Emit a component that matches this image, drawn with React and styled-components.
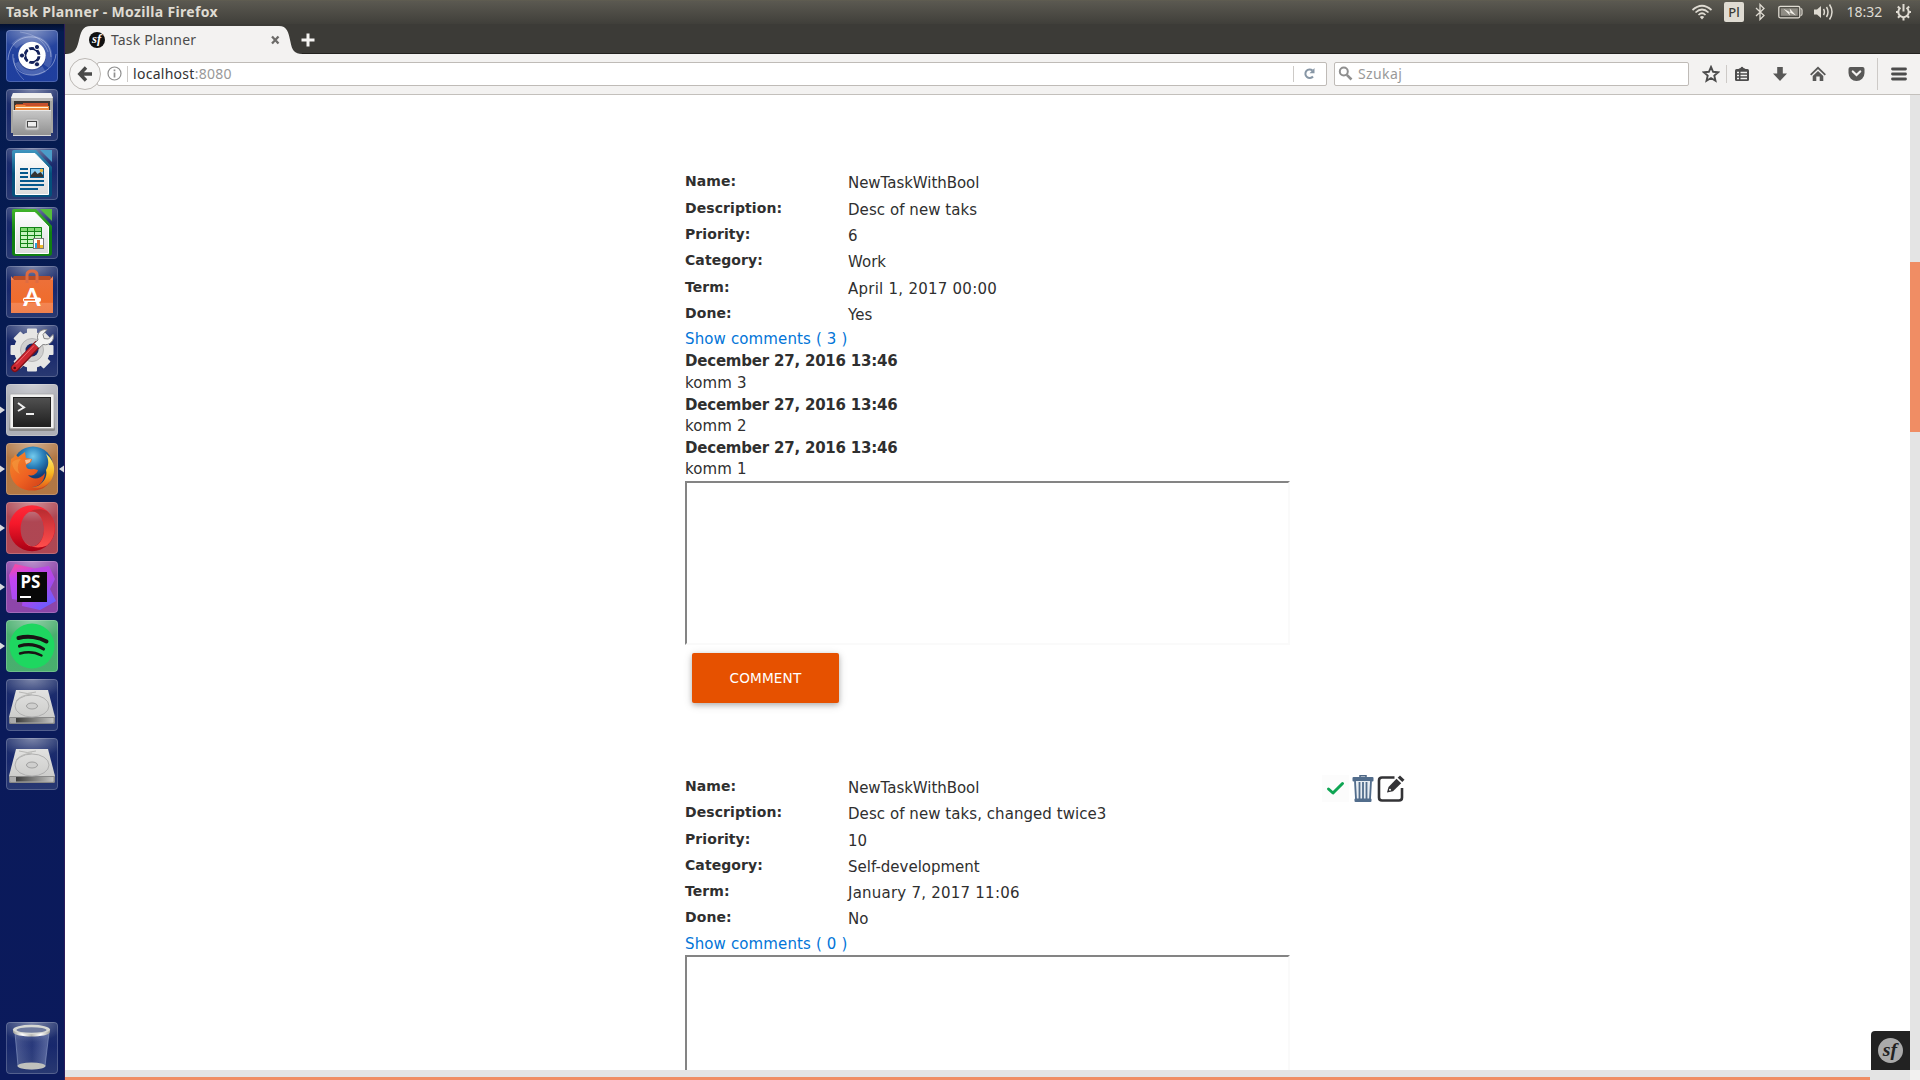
import React from "react";
import styled, { createGlobalStyle } from "styled-components";

const GlobalStyle = createGlobalStyle`
  * { box-sizing: border-box; }
  body { margin: 0; overflow: hidden; background: #fff; }
  svg { display: block; flex: none; }
`;

const ui = `"Noto Sans", "Open Sans", sans-serif`;

const Desktop = styled.div`
  width: 1920px;
  height: 1080px;
  overflow: hidden;
  display: flex;
  flex-direction: column;
  font-family: ${ui};
`;

const Panel = styled.header`
  height: 24px;
  flex: none;
  display: flex;
  align-items: center;
  justify-content: space-between;
  padding: 0 8px 0 6px;
  background: linear-gradient(#625f50 0, #5b5951 1px, #403f3a 24px);
  color: #dfdbd2;
`;

const WindowTitle = styled.div`
  font-size: 14px;
  font-weight: 700;
  line-height: 24px;
  letter-spacing: 0.33px;
`;

const Indicators = styled.div`
  display: flex;
  align-items: center;
`;

const Indicator = styled.div`
  display: flex;
  justify-content: center;
  width: ${(p) => p.$w}px;
  margin-left: ${(p) => p.$gap || 0}px;
`;

const Keyboard = styled(Indicator)`
  height: 20px;
  border-radius: 2px;
  background: #dfdbd2;
  color: #3c3b37;
  font-size: 13px;
  font-weight: 500;
  line-height: 20px;
`;

const Clock = styled(Indicator)`
  font-size: 14px;
  line-height: 24px;
`;

const Workspace = styled.div`
  flex: 1;
  display: flex;
  min-height: 0;
`;

const Launcher = styled.nav`
  width: 65px;
  flex: none;
  display: flex;
  flex-direction: column;
  gap: 7px;
  padding: 6px 0;
  border-right: 1px solid #2c1c5c;
  background: linear-gradient(#02102f 0, #051c50 8px, #061a52 300px, #0a1a5a 700px, #0b1a5c 100%);
`;

const LauncherRow = styled.div`
  height: 52px;
  display: grid;
  grid-template-columns: 6px 52px 6px;
  align-items: center;
  ${(p) => p.$bottom && "margin-top: auto;"}
`;

const Tile = styled.div`
  width: 52px;
  height: 52px;
  border-radius: 4px;
  overflow: hidden;
  box-shadow: inset 0 0 0 1px rgba(255, 255, 255, 0.2);
  background: radial-gradient(ellipse 34px 20px at 50% 0, rgba(255, 255, 255, 0.42), rgba(255, 255, 255, 0.02)),
    ${(p) => p.$color || "linear-gradient(#1e2f6b, #13246a 45%, #25356f)"};
`;

const Browser = styled.main`
  flex: 1;
  display: flex;
  flex-direction: column;
  min-width: 0;
`;

const TabBar = styled.div`
  height: 30px;
  flex: none;
  display: flex;
  background: #3c3b37;
  border-bottom: 1px solid #23221f;
`;

const Tab = styled.div`
  width: 236px;
  height: 30px;
  flex: none;
  display: flex;
  align-items: center;
  position: relative;
  padding: 2px 15px 0 24px;
  color: #4c4c4c;
  font-size: 14px;
`;

const TabShape = styled.svg`
  position: absolute;
  left: 0;
  top: 0;
`;

const TabLabel = styled.span`
  position: relative;
  flex: 1;
  margin-left: 6px;
  padding-bottom: 2px;
  letter-spacing: 0.16px;
`;

const TabPart = styled.div`
  position: relative;
`;

const NewTab = styled.div`
  display: flex;
  align-items: center;
  padding: 2px 0 0 0;
`;

const Toolbar = styled.div`
  height: 41px;
  flex: none;
  display: flex;
  align-items: center;
  padding: 0 0 1px 4px;
  background: #f3f2f1;
  border-bottom: 1px solid #c3c0bc;
  color: #4c4c4c;
`;

const BackButton = styled.div`
  width: 32px;
  height: 32px;
  flex: none;
  display: grid;
  place-items: center;
  position: relative;
  border: 1px solid #bcb8b4;
  border-radius: 50%;
  background: #f6f5f4;
`;

const Field = styled.div`
  height: 24px;
  width: ${(p) => p.$w}px;
  margin-left: ${(p) => p.$gap}px;
  padding: 0 ${(p) => p.$right || 0}px 0 ${(p) => p.$pad}px;
  flex: none;
  display: flex;
  align-items: center;
  border: 1px solid #bfbbb7;
  border-radius: 2px;
  background: #fff;
  font-size: 14px;
  line-height: 22px;
`;

const Divider = styled.div`
  width: 1px;
  flex: none;
  height: ${(p) => p.$h}px;
  margin: 0 ${(p) => p.$after || 0}px 0 ${(p) => p.$before || 0}px;
  background: #cdcac7;
`;

const Address = styled.span`
  flex: 1;
  padding-top: 1px;
  color: #333;
  letter-spacing: 0.28px;
`;

const Muted = styled.span`
  color: #999;
`;

const SearchHint = styled(Muted)`
  margin-left: 5px;
  padding-top: 1px;
  letter-spacing: 0.4px;
`;

const ToolIcon = styled.div`
  width: ${(p) => p.$w}px;
  margin-left: ${(p) => p.$gap || 0}px;
  display: flex;
  justify-content: center;
`;

const Viewport = styled.div`
  flex: 1;
  display: grid;
  grid-template-columns: 1fr 10px;
  grid-template-rows: 975px 10px;
  position: relative;
`;

const Page = styled.section`
  overflow: hidden;
  padding: 76.4px 0 0 620px;
  background: #fff;
  color: #2f2f2f;
  font-family: "DejaVu Sans", sans-serif;
  font-size: 15px;
  line-height: 21.6px;
`;

const Task = styled.article`
  height: 604.6px;
  display: grid;
  grid-template-columns: 637px auto;
  justify-content: start;
`;

const TaskBody = styled.div`
  width: 605px;
`;

const Property = styled.div`
  height: 26.3px;
  display: grid;
  grid-template-columns: 163px 1fr;
`;

const Label = styled.div`
  font-size: 14px;
  font-weight: 700;
  letter-spacing: 0.08px;
`;

const Value = styled.div`
  padding-top: 2px;
  letter-spacing: ${(p) => p.$track}px;
`;

const CommentsLink = styled.a`
  display: block;
  color: #0275d8;
  letter-spacing: 0.13px;
`;

const Comment = styled.div`
  line-height: 21.63px;
`;

const CommentList = styled.div`
  ${Comment}:first-child {
    padding-top: 0.6px;
  }
`;

const CommentDate = styled.div`
  font-weight: 700;
  letter-spacing: -0.21px;
`;

const CommentText = styled.div`
  letter-spacing: 0.12px;
`;

const CommentBox = styled.textarea`
  display: block;
  width: 605px;
  height: 164px;
  margin: 0;
  resize: none;
  border: 2px solid;
  border-color: #848484 #fafafa #fafafa #848484;
  background: #fff;
`;

const CommentButton = styled.button`
  display: block;
  width: 147px;
  height: 50px;
  margin: 8px 0 0 7px;
  padding: 0;
  border: 0;
  border-radius: 2px;
  background: #e65100;
  color: #fff;
  font: 13.6px/50px "DejaVu Sans", sans-serif;
  letter-spacing: 0.15px;
  box-shadow: 0 2px 5px rgba(0, 0, 0, 0.2), 0 2px 10px rgba(0, 0, 0, 0.16);
`;

const Actions = styled.div`
  height: 27px;
  margin-top: -1px;
  display: flex;
  align-items: center;
`;

const DoneBox = styled.div`
  width: 27px;
  height: 27px;
  margin-right: 3px;
  background: #fcfcfc;
`;

const EditIcon = styled.svg`
  margin-left: 1.5px;
`;

const VerticalTrack = styled.div`
  padding-top: 167px;
  background: #e4e4e4;
`;

const VerticalThumb = styled.div`
  height: 170px;
  background: #f08d64;
`;

const HorizontalTrack = styled.div`
  padding: 7px 40px 0 0;
  background: #e4e4e4;
`;

const HorizontalThumb = styled.div`
  height: 3px;
  background: #f08d64;
`;

const Corner = styled.div`
  background: #f2f1f0;
`;

const DebugBadge = styled.div`
  position: absolute;
  right: 10px;
  bottom: 10px;
  width: 39px;
  height: 39px;
  display: grid;
  place-items: center;
  border-top-left-radius: 4px;
  background: #222;
`;

const Arrow = ({ left }) => (
  <svg width="6" height="10" viewBox="0 0 6 10">
    <path d={left ? "M6 1.5V8.5L1 5Z" : "M0 1.5V8.5L5 5Z"} fill="#d9dade" />
  </svg>
);

const SfLogo = ({ size, bg, fg }) => (
  <svg width={size} height={size} viewBox="0 0 24 24">
    <circle cx="12" cy="12" r="12" fill={bg} />
    <text x="11.5" y="17" fontSize="19" fontStyle="italic" fontWeight="700" fontFamily="Liberation Serif, serif" textAnchor="middle" fill={fg}>sf</text>
  </svg>
);

const Glyph = ({ children }) => (
  <svg width="52" height="52" viewBox="0 0 52 52">{children}</svg>
);

const DashIcon = () => (
  <Glyph>
    <g fill="none" stroke="#dfe6fa">
      <path d="M2 30C3 14 14 6 27 7C38 8 45 16 45 27" opacity=".45" strokeWidth="1" />
      <path d="M7 24C6 38 15 46 28 45C40 43 49 36 50 24" opacity=".45" strokeWidth="1" />
      <path d="M8 16C16 8 30 6 38 14C44 20 44 30 40 36" opacity=".18" strokeWidth="7" />
      <path d="M12 32C16 41 28 45 38 39" opacity=".22" strokeWidth="7" />
      <path d="M14 2C28 4 38 10 42 22M18 50C12 44 8 38 8 28" opacity=".3" />
    </g>
    <circle cx="26" cy="26.5" r="14" fill="#04125a" opacity=".35" />
    <circle cx="26" cy="25.5" r="13.7" fill="#fff" />
    <circle cx="26" cy="25.5" r="7" fill="none" stroke="#14225c" strokeWidth="3" />
    <g stroke="#fff" strokeWidth="1.6">
      <path d="M26 25.5L38 25.5M26 25.5L20 15M26 25.5L20 36" />
    </g>
    <circle cx="26" cy="25.5" r="5.4" fill="#fff" />
    <g fill="#14225c" stroke="#fff" strokeWidth="1">
      <circle cx="16" cy="25.5" r="2.6" /><circle cx="31" cy="17" r="2.6" /><circle cx="31" cy="34.3" r="2.6" />
    </g>
  </Glyph>
);

const FilesIcon = () => (
  <Glyph>
    <defs>
      <linearGradient id="cab" x2="0" y2="1"><stop stopColor="#c8c8c8" /><stop offset="1" stopColor="#8f8f8f" /></linearGradient>
    </defs>
    <path d="M7 4H45L47 9V44H5V9Z" fill="#a7a6a3" />
    <path d="M7 4H45L47 9H5Z" fill="#f0f0ef" />
    <path d="M6 9H46V12H6Z" fill="#bdbcb9" />
    <rect x="8" y="12" width="36" height="10" fill="#3b3733" />
    <path d="M17 14H42V22H10V15H17Z" fill="#c6502c" />
    <path d="M9 16H19L20 17H43V22H9Z" fill="#f08a3c" />
    <path d="M10 18.500H42" stroke="#fff2d8" strokeWidth="1.200" />
    <path d="M7 21H45V47H7Z" fill="url(#cab)" />
    <path d="M7 21.500H45" stroke="#e8e8e8" />
    <path d="M7 46.500H45" stroke="#d9d9d9" />
    <rect x="19" y="30" width="14" height="11" rx="2" fill="#d2d2d2" stroke="#aaa" />
    <rect x="21.500" y="32.500" width="9" height="5.500" fill="#eee" stroke="#444" />
  </Glyph>
);

const DocBase = ({ dark, light, fold, id }) => (
  <>
    <defs>
      <linearGradient id={id} x2="0" y2="1"><stop stopColor={light} /><stop offset=".5" stopColor={dark} /><stop offset="1" stopColor={dark} /></linearGradient>
      <linearGradient id={id + "p"} x2="0" y2="1"><stop stopColor="#fff" /><stop offset="1" stopColor="#dcdcdc" /></linearGradient>
    </defs>
    <path d="M8 2H30L46 19V46Q46 49 43 49H9Q6 49 6 46V4Q6 2 8 2Z" fill={`url(#${id})`} />
    <path d="M9.500 5.500H29L42.500 19.500V46.500H9.500Z" fill={`url(#${id}p)`} stroke="#fff" strokeWidth="1" />
    <path d="M34 2H46V14Z" fill={fold} />
  </>
);

const WriterIcon = () => (
  <Glyph>
    <DocBase id="wr" dark="#05507c" light="#3f96c0" fold="#4b9cc8" />
    <g fill="#05588c">
      <rect x="14" y="20" width="8" height="2" /><rect x="14" y="24" width="8" height="2" /><rect x="14" y="28" width="8" height="2" />
      <rect x="14" y="32" width="24" height="2" /><rect x="14" y="36" width="24" height="2" /><rect x="14" y="40" width="18" height="2" />
    </g>
    <rect x="24.500" y="20.500" width="13" height="9" fill="#8ccdf2" stroke="#05588c" />
    <circle cx="35.500" cy="22.500" r="1.700" fill="#e7b53c" />
    <path d="M25 29V27L29 23L31.500 26L34.500 24L37 27V29Z" fill="#333" />
  </Glyph>
);

const CalcIcon = () => (
  <Glyph>
    <DocBase id="ca" dark="#108012" light="#41b52a" fold="#55bd3c" />
    <rect x="14" y="20" width="22" height="21" fill="#c6f3bf" />
    <path d="M14 20H36V24H14Z" fill="#85d975" />
    <path d="M14.500 20.500H35.500V40.500H14.500ZM14 24.500H36M14 28.500H36M14 32.500H36M14 36.500H36M21.500 20V41M28.500 20V41" fill="none" stroke="#138315" />
    <rect x="27.500" y="31.500" width="10" height="10" fill="#fff" stroke="#777" />
    <path d="M29 36H31V41H29Z" fill="#2aa1e0" /><path d="M31 33H34V41H31Z" fill="#d8682a" /><path d="M34 38H37V41H34Z" fill="#ecbd2e" />
  </Glyph>
);

const SoftwareIcon = () => (
  <Glyph>
    <defs><linearGradient id="bag" x2="0" y2="1"><stop stopColor="#ed7039" /><stop offset=".68" stopColor="#ef6c2c" /><stop offset=".69" stopColor="#f38552" /><stop offset="1" stopColor="#f0804d" /></linearGradient></defs>
    <path d="M8 10H44L47 14H5Z" fill="#b94d26" />
    <path d="M5 14H47V47H5Z" fill="url(#bag)" />
    <path d="M5 10L8 14H5ZM47 10L44 14H47Z" fill="#ee8760" />
    <path d="M21 17V9Q21 5 26 5Q31 5 31 9V17" fill="none" stroke="#dd6b42" strokeWidth="3" />
    <text x="26" y="40" fontSize="25" fontWeight="700" fontFamily="Lato, sans-serif" textAnchor="middle" fill="#fff">A</text>
    <rect x="17" y="31.500" width="18" height="4.500" rx="2" fill="#fff" />
    <rect x="18" y="33" width="11" height="1.600" fill="#ef6c2c" />
  </Glyph>
);

const SettingsIcon = () => (
  <Glyph>
    <g fill="#e6e6e4">
      {[0, 45, 90, 135].map((a) => (
        <rect key={a} x="21" y="3.500" width="10" height="43" rx="1" transform={`rotate(${a} 26 25)`} />
      ))}
      <circle cx="26" cy="25" r="18" />
    </g>
    <circle cx="26" cy="25" r="11.500" fill="#d0d0d0" stroke="#b5b5b5" />
    <circle cx="26" cy="25" r="6.500" fill="#16286a" />
    <path d="M9 43L31 20" stroke="#7e1018" strokeWidth="8" strokeLinecap="round" />
    <path d="M9 42.500L31 19.500" stroke="#cc2831" strokeWidth="6" strokeLinecap="round" />
    <path d="M10 39.500L28 20.500" stroke="#ed6970" strokeWidth="1" />
    <circle cx="8.700" cy="43" r="1.300" fill="#4d090e" />
    <path d="M28.500 18.500L32 15C30 9 34 4 41 4.500L37 9.500L38 13.500L42.500 14L47 9.500C49 15 44 21 37 19.500L33 23Z" fill="#f3f3f2" stroke="#858585" strokeWidth="1" />
  </Glyph>
);

const TerminalIcon = () => (
  <Glyph>
    <defs><linearGradient id="term" x2="0" y2="1"><stop stopColor="#505050" /><stop offset="1" stopColor="#202020" /></linearGradient></defs>
    <path d="M5 10H47L49 46Q49 47 47 47H5Q3 47 3 46Z" fill="#888" />
    <rect x="4" y="10" width="44" height="34.500" rx="1" fill="#f1f1f0" stroke="#aaa" strokeWidth=".8" />
    <rect x="7" y="13" width="38" height="30" fill="#222" />
    <rect x="8" y="14" width="36" height="28" fill="url(#term)" />
    <path d="M12 19L18 23.500L12 27M20 30H28" fill="none" stroke="#eee" strokeWidth="2" />
  </Glyph>
);

const FirefoxIcon = () => (
  <Glyph>
    <defs>
      <radialGradient id="globe" cx=".5" cy=".25"><stop stopColor="#74cbed" /><stop offset=".5" stopColor="#2c83bd" /><stop offset="1" stopColor="#123f79" /></radialGradient>
      <linearGradient id="fox" x2="1" y2="1"><stop stopColor="#f38a2b" /><stop offset=".5" stopColor="#ef6222" /><stop offset="1" stopColor="#c73514" /></linearGradient>
      <linearGradient id="tail" x2="0" y2="1"><stop stopColor="#fff278" /><stop offset=".55" stopColor="#f9b922" /><stop offset="1" stopColor="#e65c18" /></linearGradient>
    </defs>
    <circle cx="27" cy="23.500" r="20" fill="url(#globe)" />
    <path d="M40 11C43 17 43 22 40 27C42 34 37 42 27 45C43 47 49 34 48 24C47 18 44 14 40 11Z" fill="url(#tail)" />
    <path d="M5 16L8 14L9 11L12 14L19 9L20 15L26 16L25 19L20 22C20 26 23 27 28 26L32 27C30 33 24 33 22 32C26 37 34 37 39 30C38 41 31 44 26 44C33 47 40 44 44 38C40 45 34 47.500 26 47.500C13 48 4 38 4 27Z" fill="url(#fox)" />
    <path d="M19 17L25 16L24 19L20 21Z" fill="#f7bd91" />
    <path d="M6 20C8 17 11 16 15 16C11 20 11 27 14 31C10 29 7 26 6 20Z" fill="#f6a243" opacity=".5" />
  </Glyph>
);

const OperaIcon = () => (
  <Glyph>
    <defs>
      <linearGradient id="opL" x2="0" y2="1"><stop stopColor="#ff2b3a" /><stop offset=".4" stopColor="#f5182a" /><stop offset="1" stopColor="#a70014" /></linearGradient>
      <linearGradient id="opR" x2="0" y2="1"><stop stopColor="#b82c30" /><stop offset=".45" stopColor="#dc3a3e" /><stop offset="1" stopColor="#ff4e4c" /></linearGradient>
    </defs>
    <path fillRule="evenodd" d="M3 26.300A23 23 0 1 0 49 26.300A23 23 0 1 0 3 26.300ZM14.600 27A11.700 17.500 0 1 1 38 27A11.700 17.500 0 1 1 14.600 27Z" fill="url(#opL)" />
    <path d="M17.500 15.500C22 8.500 32 5 41 9A23 23 0 0 1 41 43.500C32 47.500 22 45 17.500 38.500A11.700 17.500 0 1 0 17.500 15.500Z" fill="url(#opR)" />
  </Glyph>
);

const PhpStormIcon = () => (
  <Glyph>
    <defs>
      <linearGradient id="psA" x2=".2" y2="1"><stop stopColor="#ff4d93" /><stop offset=".4" stopColor="#c444f1" /><stop offset="1" stopColor="#a64cf4" /></linearGradient>
      <linearGradient id="psB" x2=".6" y2="1"><stop stopColor="#c44ae2" /><stop offset=".55" stopColor="#b546e7" /><stop offset="1" stopColor="#6c5cff" /></linearGradient>
    </defs>
    <path d="M3 14L9 3L27 7L30 12L18 40L6 38Z" fill="url(#psA)" />
    <path d="M25 8L43 5L49 18L44 28L50 40L34 49L16 45L18 25Z" fill="url(#psB)" />
    <rect x="11" y="11" width="30" height="30" fill="#080808" />
    <text x="24.500" y="27" fontSize="17" fontWeight="700" fontFamily="Noto Sans, sans-serif" textAnchor="middle" fill="#fff">PS</text>
    <rect x="14" y="35" width="11" height="2" fill="#fff" />
  </Glyph>
);

const SpotifyIcon = () => (
  <Glyph>
    <circle cx="26" cy="26" r="22.500" fill="#1ed760" />
    <g fill="none" stroke="#191414" strokeLinecap="round">
      <path d="M12.500 18C22 15.500 33 17 40.500 21.500" strokeWidth="4" />
      <path d="M13.500 26C22 23.500 31 25 37.500 29" strokeWidth="3.200" />
      <path d="M14 33.500C21 31.500 29 32 35.500 35.500" strokeWidth="2.500" />
    </g>
  </Glyph>
);

const DriveIcon = () => (
  <Glyph>
    <defs>
      <linearGradient id="hdd" x2="0" y2="1"><stop stopColor="#e2e2e1" /><stop offset="1" stopColor="#c8c8c6" /></linearGradient>
      <linearGradient id="hddf"><stop stopColor="#3c3c3b" /><stop offset=".6" stopColor="#8d8d8b" /><stop offset="1" stopColor="#c5c5c3" /></linearGradient>
    </defs>
    <path d="M10 11H42L49 38V43Q49 45 47 45H5Q3 45 3 43V38Z" fill="url(#hdd)" />
    <path d="M3.500 38.500H48.500V43Q48.500 44.500 47 44.500H5Q3.500 44.500 3.500 43Z" fill="#aaa" stroke="#666" strokeWidth=".6" />
    <rect x="10" y="39" width="37" height="4.500" fill="url(#hddf)" />
    <ellipse cx="26" cy="27" rx="17" ry="11" fill="none" stroke="#aaa" strokeWidth=".9" />
    <ellipse cx="26" cy="27" rx="5.500" ry="3" fill="#cfcfce" stroke="#999" strokeWidth=".9" />
    <path d="M13 13Q21 16 30 13M10 22Q15 16 26 15" fill="none" stroke="#b7b7b5" />
  </Glyph>
);

const TrashCanIcon = () => (
  <Glyph>
    <defs>
      <linearGradient id="bin"><stop stopColor="#c4cce6" stopOpacity=".3" /><stop offset=".5" stopColor="#a0b0df" stopOpacity=".12" /><stop offset=".9" stopColor="#b8c5ea" stopOpacity=".35" /></linearGradient>
      <linearGradient id="rim"><stop stopColor="#a0a09a" /><stop offset=".25" stopColor="#fff" /><stop offset=".5" stopColor="#b8b8b3" /><stop offset=".75" stopColor="#fff" /><stop offset="1" stopColor="#a0a09a" /></linearGradient>
    </defs>
    <path d="M9 11L12 44Q26 50 39 44L43 11Z" fill="url(#bin)" stroke="#8d9cc8" strokeWidth=".6" />
    <ellipse cx="25.500" cy="44" rx="14" ry="3.500" fill="#bfc1bd" />
    <path d="M7 7V10C8 16 43 16 44 10V7Z" fill="url(#rim)" />
    <ellipse cx="25.500" cy="7.500" rx="18.500" ry="4.700" fill="#d7d8d4" />
    <ellipse cx="25.500" cy="8" rx="15" ry="2.800" fill="#6f7a9e" />
  </Glyph>
);

const launcherItems = [
  { icon: DashIcon, color: "linear-gradient(#2a489c, #1c3c9c 50%, #1b3b9c)" },
  { icon: FilesIcon },
  { icon: WriterIcon },
  { icon: CalcIcon },
  { icon: SoftwareIcon },
  { icon: SettingsIcon },
  { icon: TerminalIcon, color: "#acaeb6", running: true },
  { icon: FirefoxIcon, color: "#b07440", running: true, active: true },
  { icon: OperaIcon, color: "#ad4350", running: true },
  { icon: PhpStormIcon, color: "#8b42a8", running: true },
  { icon: SpotifyIcon, color: "#45ad6b", running: true },
  { icon: DriveIcon },
  { icon: DriveIcon },
  { icon: TrashCanIcon, bottom: true },
];

const tasks = [
  {
    fields: [["Name:", "NewTaskWithBool", -0.04], ["Description:", "Desc of new taks", 0.06], ["Priority:", "6"], ["Category:", "Work"], ["Term:", "April 1, 2017 00:00", 0.25], ["Done:", "Yes"]],
    comments: [["December 27, 2016 13:46", "komm 3"], ["December 27, 2016 13:46", "komm 2"], ["December 27, 2016 13:46", "komm 1"]],
    canSubmit: true,
  },
  {
    fields: [["Name:", "NewTaskWithBool", -0.04], ["Description:", "Desc of new taks, changed twice3", 0.06], ["Priority:", "10"], ["Category:", "Self-development"], ["Term:", "January 7, 2017 11:06", 0.23], ["Done:", "No"]],
    comments: [],
    editable: true,
  },
];

const TaskCard = ({ task }) => (
  <Task>
    <TaskBody>
      {task.fields.map(([label, value, track = 0]) => (
        <Property key={label}>
          <Label>{label}</Label>
          <Value $track={track}>{value}</Value>
        </Property>
      ))}
      <CommentsLink>Show comments ( {task.comments.length} )</CommentsLink>
      <CommentList>
        {task.comments.map(([date, text]) => (
          <Comment key={text}>
            <CommentDate>{date}</CommentDate>
            <CommentText>{text}</CommentText>
          </Comment>
        ))}
      </CommentList>
      <CommentBox />
      {task.canSubmit && <CommentButton>COMMENT</CommentButton>}
    </TaskBody>
    {task.editable && (
      <Actions>
        <DoneBox>
          <svg width="27" height="27" viewBox="0 0 27 27"><path d="M6.500 14L11 18L20.500 8.500" fill="none" stroke="#0ea553" strokeWidth="3" strokeLinecap="round" strokeLinejoin="round" /></svg>
        </DoneBox>
        <svg width="22" height="27" viewBox="0 0 22 27">
          <path d="M8 2.500V.8H14V2.500" fill="none" stroke="#4d6684" strokeWidth="1.500" />
          <rect x=".5" y="2" width="21" height="4.500" rx="1" fill="#526d8c" />
          <path d="M2 6H20L19 24.500H3Z" fill="#e8edf2" />
          <path d="M3 6L4 24M7.500 7V24M11 7V24M14.500 7V24M19 6L18 24" stroke="#526d8c" strokeWidth="1.800" />
          <rect x="2.500" y="23.500" width="17" height="3.500" rx="1" fill="#526d8c" />
        </svg>
        <EditIcon width="29" height="27" viewBox="0 0 29 27">
          <path d="M18.500 2.500H6Q3 2.500 3 5.500V22.500Q3 25.500 6 25.500H23Q26 25.500 26 22.500V13" fill="none" stroke="#333336" strokeWidth="2.600" />
          <path d="M11 17.500L12.500 12L20.500 3.800L25.200 8.200L17 16.200Z" fill="#333336" />
          <path d="M21.700 2.700L24 .5L28.500 4.800L26.300 7.100Z" fill="#333336" />
          <circle cx="14" cy="14.800" r="1" fill="#fff" />
        </EditIcon>
      </Actions>
    )}
  </Task>
);

export default function App() {
  return (
    <>
      <GlobalStyle />
      <Desktop>
        <Panel>
          <WindowTitle>Task Planner - Mozilla Firefox</WindowTitle>
          <Indicators>
            <Indicator $w={22}>
              <svg width="22" height="16" viewBox="0 0 22 16" fill="none" stroke="#dfdbd2" strokeWidth="1.7">
                <path d="M1.500 6Q11-2.500 20.500 6M4.500 8.500Q11 2.500 17.500 8.500M7.500 11Q11 7.500 14.500 11" />
                <path d="M8.800 13Q11 11 13.200 13L11 15.500Z" fill="#dfdbd2" stroke="none" />
              </svg>
            </Indicator>
            <Keyboard $w={20} $gap={11}>Pl</Keyboard>
            <Indicator $w={12} $gap={10}>
              <svg width="12" height="18" viewBox="0 0 12 18"><path d="M2 5L10 12.500L6 16.500V1.500L10 5.500L2 13" fill="none" stroke="#dfdbd2" strokeWidth="1.300" /></svg>
            </Indicator>
            <Indicator $w={25} $gap={12}>
              <svg width="25" height="14" viewBox="0 0 25 14">
                <rect x=".8" y="1.300" width="21" height="11.500" rx="1.500" fill="none" stroke="#dfdbd2" strokeWidth="1.300" />
                <rect x="2.800" y="3.300" width="17" height="7.500" fill="#8f8c84" />
                <path d="M22.500 3.500Q24 3.500 24 5V9Q24 10.500 22.500 10.500" fill="none" stroke="#dfdbd2" strokeWidth="1.200" />
                <path d="M5.500 3.800L12.500 7.600L11.700 3.500L18 10.500L11.200 7.300L12 10.500Z" fill="#f2efe8" />
              </svg>
            </Indicator>
            <Indicator $w={22} $gap={10}>
              <svg width="22" height="18" viewBox="0 0 22 18">
                <path d="M1 6.500H4L8 3V15L4 11.500H1Z" fill="#dfdbd2" />
                <path d="M10.500 6Q12.300 9 10.500 12M13.500 4Q16.500 9 13.500 14M16.500 1.500Q21.500 9 16.500 16.500" fill="none" stroke="#dfdbd2" strokeWidth="1.500" />
              </svg>
            </Indicator>
            <Clock $w={37} $gap={11}>18:32</Clock>
            <Indicator $w={17} $gap={12}>
              <svg width="17" height="18" viewBox="0 0 17 18" fill="none" stroke="#dfdbd2">
                <path d="M5.500 4.700A5.200 5.200 0 1 0 11.500 4.700" strokeWidth="2" />
                <path d="M8.500 1V8.500" strokeWidth="2" />
                <path d="M8.500 14V17.500M1 9H3.500M13.500 9H16M3 14.700L4.800 12.800M14 14.700L12.200 12.800M2.800 3.500L4.600 5.300M14.200 3.500L12.400 5.300" strokeWidth="2" />
              </svg>
            </Indicator>
          </Indicators>
        </Panel>
        <Workspace>
          <Launcher>
            {launcherItems.map(({ icon: Icon, color, running, active, bottom }, i) => (
              <LauncherRow key={i} $bottom={bottom}>
                <div>{running && <Arrow />}</div>
                <Tile $color={color}><Icon /></Tile>
                <div>{active && <Arrow left />}</div>
              </LauncherRow>
            ))}
          </Launcher>
          <Browser>
            <TabBar>
              <Tab>
                <TabShape width="240" height="30" viewBox="0 0 240 30">
                  <path d="M0 30C9 30 11.500 26 13.500 18C16 8 17 2 26 2H214C222 2 223.500 8 225.500 18C227 26 229 30 238 30Z" fill="#f3f2f1" />
                </TabShape>
                <TabPart><SfLogo size={16} bg="#111" fg="#fff" /></TabPart>
                <TabLabel>Task Planner</TabLabel>
                <TabPart>
                  <svg width="16" height="10" viewBox="0 0 16 10"><path d="M2 1.500L8.500 8.500M8.500 1.500L2 8.500" stroke="#6c6b69" strokeWidth="2.300" /></svg>
                </TabPart>
              </Tab>
              <NewTab>
                <svg width="14" height="14" viewBox="0 0 14 14"><path d="M7 .5V13.500M.5 7H13.500" stroke="#f5f4f2" strokeWidth="3" /></svg>
              </NewTab>
            </TabBar>
            <Toolbar>
              <BackButton>
                <svg width="16" height="16" viewBox="0 0 16 16"><path d="M9 1.500L2.800 8L9 14.500M3.500 8H15" fill="none" stroke="#4a4a49" strokeWidth="3.400" /></svg>
              </BackButton>
              <Field $w={1230} $gap={-4} $pad={9} $right={10}>
                <svg width="15" height="15" viewBox="0 0 15 15" fill="none" stroke="#8f8f8f">
                  <circle cx="7.500" cy="7.500" r="6.500" strokeWidth="1.200" />
                  <path d="M7.500 6.500V11.500M7.500 3.500V5.200" strokeWidth="1.700" />
                </svg>
                <Divider $h={16} $before={5} $after={5} />
                <Address>localhost<Muted>:8080</Muted></Address>
                <Divider $h={16} $after={9} />
                <svg width="13" height="13" viewBox="0 0 13 13"><path d="M10 9.500A4.300 4.300 0 1 1 9.500 3.500" fill="none" stroke="#8796a5" strokeWidth="2" /><path d="M11.500 1V6.300H6.500Z" fill="#8796a5" /></svg>
              </Field>
              <Field $w={355} $gap={7} $pad={3}>
                <svg width="15" height="15" viewBox="0 0 15 15" fill="none" stroke="#8f8f8f"><circle cx="5.800" cy="5.500" r="4" strokeWidth="2" /><path d="M8.800 8.800L13.500 13.500" strokeWidth="2.600" /></svg>
                <SearchHint>Szukaj</SearchHint>
              </Field>
              <ToolIcon $w={18} $gap={13}>
                <svg width="18" height="18" viewBox="0 0 18 18"><path d="M9 2L11.100 6.800L16.200 7.200L12.300 10.600L13.500 15.800L9 13L4.500 15.800L5.700 10.600L1.800 7.200L6.900 6.800Z" fill="none" stroke="#4c4c4c" strokeWidth="1.900" /></svg>
              </ToolIcon>
              <Divider $h={18} $before={6} $after={7} />
              <ToolIcon $w={16}>
                <svg width="16" height="16" viewBox="0 0 16 16"><path d="M2.500 3H13.500Q15 3 15 4.500V13.500Q15 15 13.500 15H2.500Q1 15 1 13.500V4.500Q1 3 2.500 3Z" fill="#4c4c4c" /><path d="M4 3.500Q5 2 6.500 2Q8-.5 9.500 2Q11 2 12 3.500Z" fill="#4c4c4c" /><path d="M3 6.500H5M6.500 6.500H13M3 9.500H5M6.500 9.500H13M3 12.500H5M6.500 12.500H13" stroke="#f3f2f1" strokeWidth="1.600" /></svg>
              </ToolIcon>
              <ToolIcon $w={16} $gap={22}>
                <svg width="16" height="16" viewBox="0 0 16 16"><path d="M5.200 1H10.800V7.500H15L8 15L1 7.500H5.200Z" fill="#585857" /></svg>
              </ToolIcon>
              <ToolIcon $w={16} $gap={22}>
                <svg width="16" height="16" viewBox="0 0 16 16"><path d="M.7 8.800L8 1.800L15.300 8.800" fill="none" stroke="#585857" strokeWidth="1.800" /><path d="M8 5L13.300 10V15H9.700V10.500H6.300V15H2.700V10Z" fill="#585857" /></svg>
              </ToolIcon>
              <ToolIcon $w={17} $gap={22}>
                <svg width="17" height="16" viewBox="0 0 17 16"><path d="M2.500 1H14.500Q16.500 1 16.500 3V7A8 8 0 0 1 .5 7V3Q.5 1 2.500 1Z" fill="#585857" /><path d="M4.800 5.500L8.500 9L12.200 5.500" fill="none" stroke="#f3f2f1" strokeWidth="2.200" strokeLinecap="round" /></svg>
              </ToolIcon>
              <Divider $h={32} $before={12} $after={13} />
              <svg width="16" height="14" viewBox="0 0 16 14"><path d="M1.500 2H14.500M1.500 7H14.500M1.500 12H14.500" stroke="#4c4c4c" strokeWidth="2.800" strokeLinecap="round" /></svg>
            </Toolbar>
            <Viewport>
              <Page>
                {tasks.map((task, i) => <TaskCard key={i} task={task} />)}
              </Page>
              <VerticalTrack><VerticalThumb /></VerticalTrack>
              <HorizontalTrack><HorizontalThumb /></HorizontalTrack>
              <Corner />
              <DebugBadge><SfLogo size={25} bg="#aaa" fg="#222" /></DebugBadge>
            </Viewport>
          </Browser>
        </Workspace>
      </Desktop>
    </>
  );
}
